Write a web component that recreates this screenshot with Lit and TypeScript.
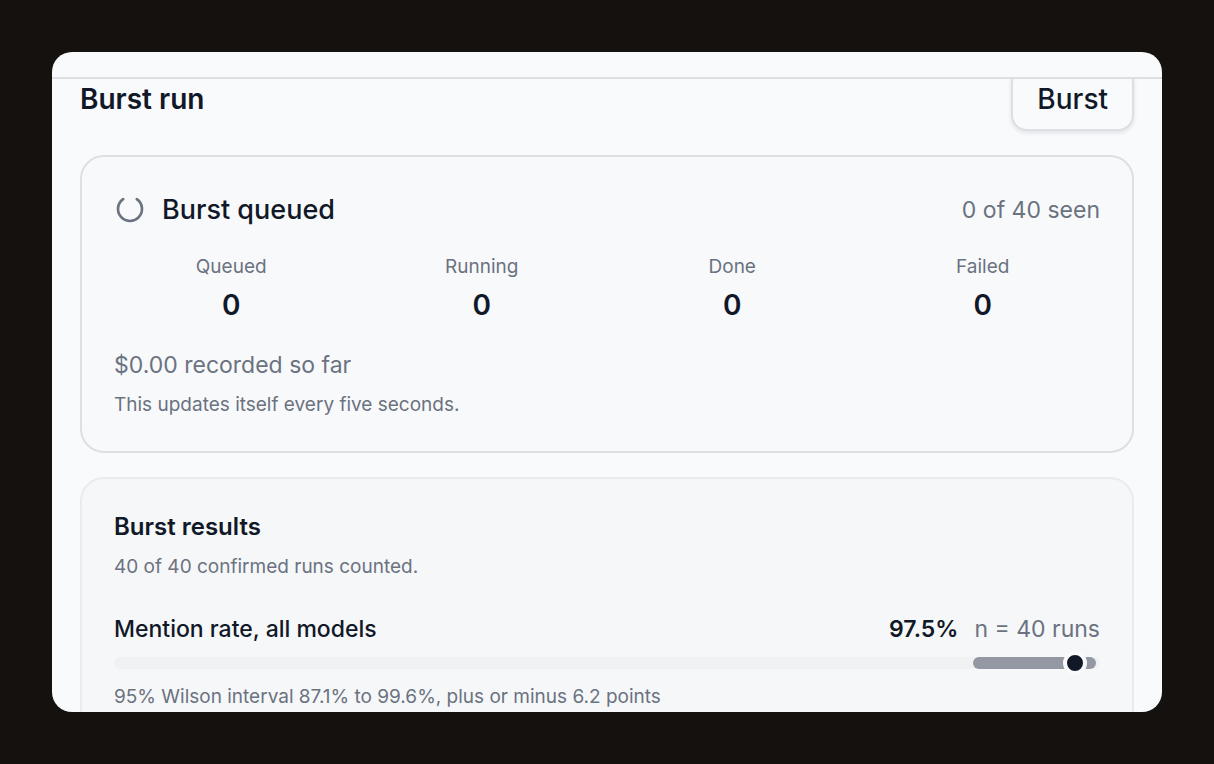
import { LitElement, html, css } from "lit";
import { customElement, property, state } from "lit/decorators.js";
import { styleMap } from "lit/directives/style-map.js";

@customElement("rate-interval")
class RateInterval extends LitElement {
  @property({ type: Number }) low = 0;
  @property({ type: Number }) high = 0;
  @property({ type: Number }) value = 0;

  static styles = css`
    :host {
      display: block;
    }
    .track {
      position: relative;
      height: 12px;
      border-radius: 6px;
      background: #eff1f3;
    }
    .range {
      position: absolute;
      top: 0;
      bottom: 0;
      border-radius: 6px;
      background: #9498a2;
    }
    .dot {
      position: absolute;
      top: 50%;
      width: 16px;
      height: 16px;
      border: 4px solid #f8fafc;
      border-radius: 50%;
      background: #111827;
      transform: translate(-50%, -50%);
    }
  `;

  render() {
    const range = { left: `${this.low}%`, width: `${this.high - this.low}%` };
    return html`
      <div class="track">
        <div class="range" style=${styleMap(range)}></div>
        <div class="dot" style=${styleMap({ left: `${this.value}%` })}></div>
      </div>
    `;
  }
}

@customElement("app-root")
class AppRoot extends LitElement {
  @state() private counts = [
    { label: "Queued", value: 0 },
    { label: "Running", value: 0 },
    { label: "Done", value: 0 },
    { label: "Failed", value: 0 },
  ];

  static styles = css`
    :host {
      display: block;
      box-sizing: border-box;
      height: 100vh;
      padding: 52px;
      background: #14110e;
      color: #111827;
      font-family: Inter, "Liberation Sans", sans-serif;
      font-size: 23px;
      line-height: 32px;
    }
    * {
      box-sizing: border-box;
    }
    h1,
    h2,
    h3,
    p,
    dl,
    dd {
      margin: 0;
    }
    .frame {
      display: flex;
      flex-direction: column;
      height: 100%;
      overflow: hidden;
      border-radius: 20px;
      background: #f8fafc;
    }
    .topbar {
      flex: none;
      height: 27px;
      border-bottom: 2px solid #dddfe2;
    }
    .viewport {
      flex: 1;
      min-height: 0;
      overflow: hidden;
    }
    .content {
      display: flex;
      flex-direction: column;
      gap: 24px;
      margin-top: -12px;
      padding: 0 28px 28px;
    }
    .row {
      display: flex;
      align-items: center;
      justify-content: space-between;
      gap: 16px;
    }
    h1 {
      font-size: 28px;
      font-weight: 600;
      line-height: 40px;
    }
    .burst {
      height: 64px;
      padding: 0 24px;
      border: 2px solid #dddfe2;
      border-radius: 16px;
      background: #f8fafc;
      box-shadow: 0 2px 4px rgba(17, 24, 39, 0.1);
      color: inherit;
      font: inherit;
      font-size: 28px;
      font-weight: 500;
    }
    .card {
      padding: 32px 32px 30px;
      border: 2px solid #dddfe2;
      border-radius: 24px;
      background: #f8f9fb;
    }
    .results {
      border-color: #e9ebee;
      background: #f6f7f9;
    }
    .status {
      display: flex;
      align-items: center;
      gap: 16px;
    }
    .status h2 {
      font-size: 27px;
      font-weight: 500;
      line-height: 42px;
    }
    .spinner {
      width: 32px;
      height: 32px;
      color: #6b7280;
    }
    .muted {
      color: #6b7280;
    }
    .small {
      color: #6b7280;
      font-size: 19px;
      line-height: 32px;
    }
    .counts {
      display: grid;
      grid-template-columns: repeat(4, 1fr);
      gap: 16px;
      margin: 20px 0 24px;
      text-align: center;
    }
    .counts dd {
      margin-top: 2px;
      font-size: 28px;
      font-weight: 600;
      line-height: 40px;
    }
    .note {
      margin-top: 8px;
    }
    .results h2 {
      font-size: 24px;
      font-weight: 600;
    }
    .metric {
      margin: 30px 0 12px;
    }
    .metric h3 {
      font-size: 23px;
      font-weight: 500;
    }
    .figures {
      display: flex;
      gap: 16px;
    }
    .figures strong {
      font-weight: 600;
    }
    .interval {
      margin-top: 12px;
    }
  `;

  render() {
    return html`
      <div class="frame">
        <div class="topbar"></div>
        <div class="viewport">
          <main class="content">
            <div class="row">
              <h1>Burst run</h1>
              <button class="burst" type="button">Burst</button>
            </div>

            <section class="card">
              <div class="row">
                <div class="status">
                  <svg class="spinner" viewBox="0 0 32 32" fill="none" stroke="currentColor" stroke-width="2.67" stroke-linecap="round" aria-hidden="true">
                    <path d="M22.8 5.1 A12 12 0 1 1 9.2 5.1" />
                  </svg>
                  <h2>Burst queued</h2>
                </div>
                <span class="muted">0 of 40 seen</span>
              </div>
              <dl class="counts">
                ${this.counts.map(
                  (c) => html`<div><dt class="small">${c.label}</dt><dd>${c.value}</dd></div>`,
                )}
              </dl>
              <p class="muted">$0.00 recorded so far</p>
              <p class="small note">This updates itself every five seconds.</p>
            </section>

            <section class="card results">
              <h2>Burst results</h2>
              <p class="small note">40 of 40 confirmed runs counted.</p>
              <div class="row metric">
                <h3>Mention rate, all models</h3>
                <div class="figures">
                  <strong>97.5%</strong>
                  <span class="muted">n = 40 runs</span>
                </div>
              </div>
              <rate-interval .low=${87.1} .high=${99.6} .value=${97.5}></rate-interval>
              <p class="small interval">95% Wilson interval 87.1% to 99.6%, plus or minus 6.2 points</p>
            </section>
          </main>
        </div>
      </div>
    `;
  }
}
